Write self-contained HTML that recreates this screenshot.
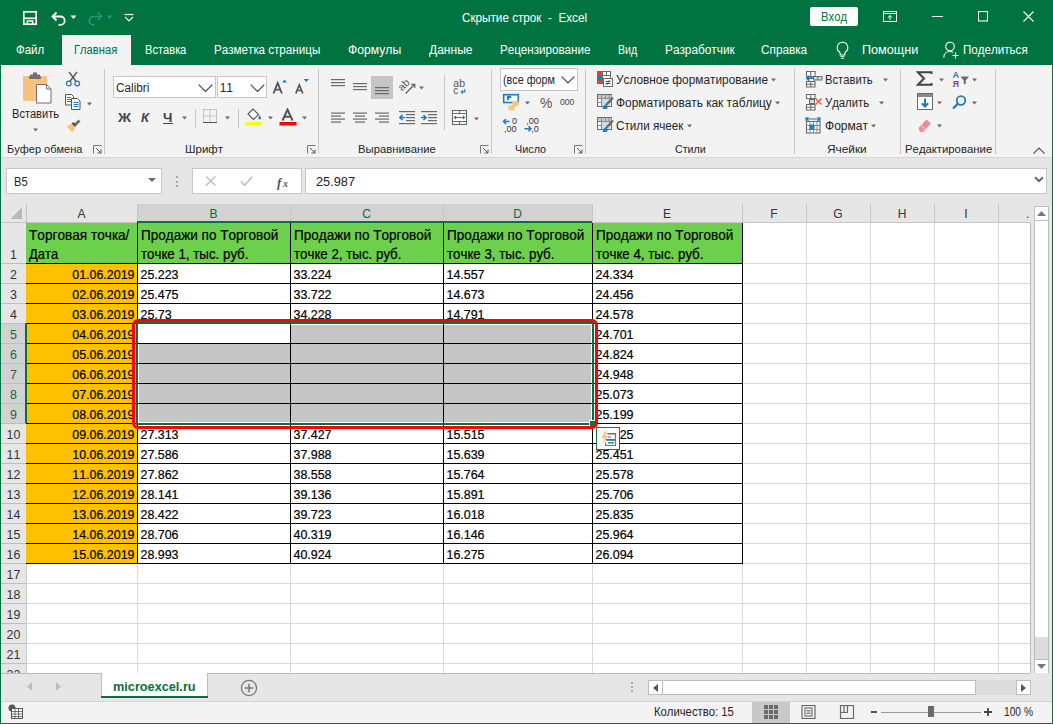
<!DOCTYPE html>
<html><head><meta charset="utf-8"><style>
html,body{margin:0;padding:0;width:1053px;height:724px;overflow:hidden;background:#f3f3f3}
#r{position:relative;width:1053px;height:724px;overflow:hidden}
#r>div,#r>svg,#r>span{position:absolute;display:block}
.t{white-space:nowrap;font-family:"Liberation Sans",sans-serif;font-kerning:none}
</style></head><body><div id="r">
<div style="left:0px;top:0px;width:1053px;height:65px;background:#017341"></div>
<svg style="left:22px;top:10px;" width="16" height="16" viewBox="0 0 16 16"><rect x="1.8" y="1.8" width="12.4" height="12.4" fill="none" stroke="#fff" stroke-width="1.7"/><path d="M1.8 8.3h12.4" stroke="#fff" stroke-width="1.6"/><path d="M5.3 14.5v-3.5h5.4v3.5" fill="none" stroke="#fff" stroke-width="1.5"/></svg>
<svg style="left:50px;top:10px;" width="18" height="16" viewBox="0 0 18 16"><path d="M3 6.5h7.5a4.2 4.2 0 0 1 0 8.4h-2" fill="none" stroke="#fff" stroke-width="1.8"/><path d="M6.5 2.5L2.5 6.5l4 4" fill="none" stroke="#fff" stroke-width="1.8"/></svg>
<svg style="left:70px;top:15px;" width="7" height="5" viewBox="0 0 7 5"><path d="M0.5 0.5h6l-3 3.5z" fill="#fff"/></svg>
<svg style="left:86px;top:10px;" width="18" height="16" viewBox="0 0 18 16"><path d="M15 6.5h-7.5a4.2 4.2 0 0 0 0 8.4h1" fill="none" stroke="#2a9577" stroke-width="1.6"/><path d="M11.5 2.5l4 4-4 4" fill="none" stroke="#2a9577" stroke-width="1.6"/></svg>
<svg style="left:106px;top:15px;" width="7" height="5" viewBox="0 0 7 5"><path d="M0.5 0.5h6l-3 3.5z" fill="#2a9577"/></svg>
<svg style="left:124px;top:13px;" width="10" height="9" viewBox="0 0 10 9"><path d="M0.5 1.5h9" stroke="#fff" stroke-width="1.2"/><path d="M1 4l4 4 4-4" fill="none" stroke="#fff" stroke-width="1.1"/></svg>
<span class="t" style="transform:scaleX(0.9750);left:462px;transform-origin:0 0;top:11.84px;font-size:12px;line-height:12px;color:#fff;font-weight:normal;">Скрытие строк&nbsp; -&nbsp; Excel</span>
<div style="left:810px;top:7px;width:48px;height:19px;background:#fff;border-radius:2px"></div>
<span class="t" style="transform:scaleX(0.9391);left:821px;transform-origin:0 0;top:10.84px;font-size:12px;line-height:12px;color:#017341;font-weight:normal;">Вход</span>
<svg style="left:883px;top:10px;" width="15" height="12" viewBox="0 0 15 12"><rect x="0.5" y="1.5" width="13" height="10" fill="none" stroke="#fff" stroke-width="1"/><path d="M0.5 3.5h13" stroke="#fff"/><path d="M7 10V5.5M4.8 7.7L7 5.5l2.2 2.2" fill="none" stroke="#fff" stroke-width="1"/></svg>
<div style="left:932px;top:16px;width:11px;height:1px;background:#fff"></div>
<svg style="left:978px;top:11px;" width="11" height="11" viewBox="0 0 11 11"><rect x="0.5" y="0.5" width="9" height="9.5" fill="none" stroke="#fff" stroke-width="1.1"/></svg>
<svg style="left:1023px;top:11px;" width="11" height="11" viewBox="0 0 11 11"><path d="M0.5 0.5l10 10M10.5 0.5l-10 10" stroke="#fff" stroke-width="1.1"/></svg>
<div style="left:62px;top:35px;width:69px;height:30px;background:#f3f3f3"></div>
<span class="t" style="transform:scaleX(0.9554);left:16px;transform-origin:0 0;top:43.84px;font-size:12px;line-height:12px;color:#fff;font-weight:normal;">Файл</span>
<span class="t" style="transform:scaleX(0.9340);left:74px;transform-origin:0 0;top:43.84px;font-size:12px;line-height:12px;color:#017341;font-weight:normal;">Главная</span>
<span class="t" style="transform:scaleX(0.9262);left:145.2px;transform-origin:0 0;top:43.84px;font-size:12px;line-height:12px;color:#fff;font-weight:normal;">Вставка</span>
<span class="t" style="transform:scaleX(0.9705);left:214.4px;transform-origin:0 0;top:43.84px;font-size:12px;line-height:12px;color:#fff;font-weight:normal;">Разметка страницы</span>
<span class="t" style="transform:scaleX(1.0161);left:348.3px;transform-origin:0 0;top:43.84px;font-size:12px;line-height:12px;color:#fff;font-weight:normal;">Формулы</span>
<span class="t" style="transform:scaleX(1.0032);left:428.7px;transform-origin:0 0;top:43.84px;font-size:12px;line-height:12px;color:#fff;font-weight:normal;">Данные</span>
<span class="t" style="transform:scaleX(0.9672);left:499.5px;transform-origin:0 0;top:43.84px;font-size:12px;line-height:12px;color:#fff;font-weight:normal;">Рецензирование</span>
<span class="t" style="transform:scaleX(0.8840);left:617.5px;transform-origin:0 0;top:43.84px;font-size:12px;line-height:12px;color:#fff;font-weight:normal;">Вид</span>
<span class="t" style="transform:scaleX(0.9847);left:664.5px;transform-origin:0 0;top:43.84px;font-size:12px;line-height:12px;color:#fff;font-weight:normal;">Разработчик</span>
<span class="t" style="transform:scaleX(0.9826);left:761px;transform-origin:0 0;top:43.84px;font-size:12px;line-height:12px;color:#fff;font-weight:normal;">Справка</span>
<span class="t" style="transform:scaleX(1.0536);left:862.4px;transform-origin:0 0;top:43.84px;font-size:12px;line-height:12px;color:#fff;font-weight:normal;">Помощни</span>
<span class="t" style="transform:scaleX(0.9666);left:963px;transform-origin:0 0;top:43.84px;font-size:12px;line-height:12px;color:#fff;font-weight:normal;">Поделиться</span>
<svg style="left:835px;top:41px;" width="15" height="18" viewBox="0 0 15 18"><path d="M7.5 1.2a5.3 5.3 0 0 0-3.2 9.5c.6.6.9 1.3.9 2v1.3h4.6v-1.3c0-.7.3-1.4.9-2a5.3 5.3 0 0 0-3.2-9.5z" fill="none" stroke="#fff" stroke-width="1.1"/><path d="M5.5 15.8h4M6.2 17.5h2.6" stroke="#fff" stroke-width="1.1"/></svg>
<svg style="left:943px;top:41px;" width="17" height="18" viewBox="0 0 17 18"><circle cx="7" cy="5.5" r="4.3" fill="none" stroke="#fff" stroke-width="1.1"/><path d="M0.8 16.5c0-3.6 2.7-6 6.2-6 1.3 0 2.4.3 3.3.9" fill="none" stroke="#fff" stroke-width="1.1"/><path d="M12.5 11.5v6M9.5 14.5h6" stroke="#fff" stroke-width="1.1"/></svg>
<div style="left:0px;top:65px;width:1053px;height:92px;background:#f3f3f3"></div>
<div style="left:0px;top:157px;width:1053px;height:1px;background:#d6d6d6"></div>
<div style="left:0px;top:158px;width:1053px;height:45px;background:#e6e6e6"></div>
<div style="left:104px;top:69px;width:1px;height:85px;background:#c8c8c8"></div>
<div style="left:318px;top:69px;width:1px;height:85px;background:#c8c8c8"></div>
<div style="left:491px;top:69px;width:1px;height:85px;background:#c8c8c8"></div>
<div style="left:585px;top:69px;width:1px;height:85px;background:#c8c8c8"></div>
<div style="left:794px;top:69px;width:1px;height:85px;background:#c8c8c8"></div>
<div style="left:900px;top:69px;width:1px;height:85px;background:#c8c8c8"></div>
<div style="left:995px;top:69px;width:1px;height:85px;background:#c8c8c8"></div>
<span class="t" style="transform:scaleX(1.0005);left:6.6px;transform-origin:0 0;top:144.09px;font-size:11px;line-height:11px;color:#262626;font-weight:normal;">Буфер обмена</span>
<span class="t" style="transform:scaleX(1.0429);left:184.8px;transform-origin:0 0;top:144.09px;font-size:11px;line-height:11px;color:#262626;font-weight:normal;">Шрифт</span>
<span class="t" style="transform:scaleX(1.0258);left:357.6px;transform-origin:0 0;top:144.09px;font-size:11px;line-height:11px;color:#262626;font-weight:normal;">Выравнивание</span>
<span class="t" style="transform:scaleX(0.9836);left:514.6px;transform-origin:0 0;top:144.09px;font-size:11px;line-height:11px;color:#262626;font-weight:normal;">Число</span>
<span class="t" style="transform:scaleX(0.9652);left:674.6px;transform-origin:0 0;top:144.09px;font-size:11px;line-height:11px;color:#262626;font-weight:normal;">Стили</span>
<span class="t" style="transform:scaleX(1.0757);left:826.9px;transform-origin:0 0;top:144.09px;font-size:11px;line-height:11px;color:#262626;font-weight:normal;">Ячейки</span>
<span class="t" style="transform:scaleX(1.0316);left:904.5px;transform-origin:0 0;top:144.09px;font-size:11px;line-height:11px;color:#262626;font-weight:normal;">Редактирование</span>
<svg style="left:93px;top:145px;" width="9" height="9" viewBox="0 0 9 9"><path d="M0.5 8.5v-8h8" fill="none" stroke="#777" stroke-width="1"/><path d="M3 3l5 5M8 4.5v3.5h-3.5" fill="none" stroke="#555" stroke-width="1"/></svg>
<svg style="left:307px;top:145px;" width="9" height="9" viewBox="0 0 9 9"><path d="M0.5 8.5v-8h8" fill="none" stroke="#777" stroke-width="1"/><path d="M3 3l5 5M8 4.5v3.5h-3.5" fill="none" stroke="#555" stroke-width="1"/></svg>
<svg style="left:480px;top:145px;" width="9" height="9" viewBox="0 0 9 9"><path d="M0.5 8.5v-8h8" fill="none" stroke="#777" stroke-width="1"/><path d="M3 3l5 5M8 4.5v3.5h-3.5" fill="none" stroke="#555" stroke-width="1"/></svg>
<svg style="left:574px;top:145px;" width="9" height="9" viewBox="0 0 9 9"><path d="M0.5 8.5v-8h8" fill="none" stroke="#777" stroke-width="1"/><path d="M3 3l5 5M8 4.5v3.5h-3.5" fill="none" stroke="#555" stroke-width="1"/></svg>
<svg style="left:1033px;top:147px;" width="12" height="7" viewBox="0 0 12 7"><path d="M0.5 6.5l5.5-5.5 5.5 5.5" fill="none" stroke="#555" stroke-width="1.1"/></svg>
<svg style="left:20px;top:71px;" width="34" height="34" viewBox="0 0 34 34"><rect x="3" y="5" width="24" height="25" rx="1" fill="#f7c27a"/><path d="M10 3.5h10v3h-10z" fill="#6f6f6f"/><rect x="13" y="1.5" width="4" height="3" fill="#6f6f6f"/><rect x="9" y="5" width="12" height="3" rx="1" fill="#6f6f6f"/><path d="M16.5 13.5h10l4.5 4.5v14h-14.5z" fill="#fff" stroke="#6f6f6f" stroke-width="1"/><path d="M26.5 13.5v4.5h4.5" fill="none" stroke="#6f6f6f" stroke-width="1"/></svg>
<span class="t" style="transform:scaleX(0.9216);left:11.7px;transform-origin:0 0;top:108.34px;font-size:12px;line-height:12px;color:#262626;font-weight:normal;">Вставить</span>
<svg style="left:33px;top:128px;" width="6" height="4" viewBox="0 0 6 4"><path d="M0 0.5h5l-2.5 3z" fill="#6a6a6a"/></svg>
<svg style="left:65px;top:71px;" width="16" height="16" viewBox="0 0 16 16"><path d="M4 1l7.5 10M12 1L4.5 11" stroke="#555" stroke-width="1.3"/><circle cx="3.8" cy="12.5" r="2.4" fill="none" stroke="#1e7bc4" stroke-width="1.2"/><circle cx="12.2" cy="12.5" r="2.4" fill="none" stroke="#1e7bc4" stroke-width="1.2"/></svg>
<svg style="left:65px;top:94px;" width="16" height="16" viewBox="0 0 16 16"><path d="M0.5 0.5h6l2 2v8.5h-8z" fill="#fff" stroke="#555" stroke-width="1"/><path d="M2 3.5h4M2 5.5h4M2 7.5h4" stroke="#1e7bc4" stroke-width="1"/><path d="M6.5 4.5h6l2.5 2.5v8.5h-8.5z" fill="#fff" stroke="#555" stroke-width="1"/><path d="M8.5 8.5h5M8.5 10.5h5M8.5 12.5h5" stroke="#1e7bc4" stroke-width="1"/></svg>
<svg style="left:87px;top:102px;" width="6" height="4" viewBox="0 0 6 4"><path d="M0 0.5h5l-2.5 3z" fill="#6a6a6a"/></svg>
<svg style="left:65px;top:117px;" width="16" height="16" viewBox="0 0 16 16"><path d="M9.5 6.5l4-4 2 2-4 4z" fill="#6f6f6f"/><path d="M1.5 9.5l5-3 4 4-3 5z" fill="#f7c27a"/><path d="M6.5 6.5l2-1.5 3 3-1.5 2z" fill="#555"/></svg>
<div style="left:113px;top:76px;width:103px;height:22px;background:#fff;border:1px solid #c6c6c6;box-sizing:border-box"></div>
<div style="left:217px;top:76px;width:50px;height:22px;background:#fff;border:1px solid #c6c6c6;box-sizing:border-box"></div>
<span class="t" style="transform:scaleX(0.9819);left:116.4px;transform-origin:0 0;top:81.84px;font-size:12px;line-height:12px;color:#262626;font-weight:normal;">Calibri</span>
<span class="t" style="left:219.7px;transform-origin:0 0;top:81.84px;font-size:12px;line-height:12px;color:#262626;font-weight:normal;">11</span>
<svg style="left:198px;top:84px;" width="15" height="9" viewBox="0 0 15 9"><path d="M0.7 0.7l6.8 6.8 6.8-6.8" fill="none" stroke="#444" stroke-width="1.2"/></svg>
<svg style="left:249.5px;top:84px;" width="15" height="9" viewBox="0 0 15 9"><path d="M0.7 0.7l6.8 6.8 6.8-6.8" fill="none" stroke="#444" stroke-width="1.2"/></svg>
<svg style="left:272px;top:78px;" width="15" height="17" viewBox="0 0 15 17"><path d="M1.5 15.5l4.2-10.5 4.2 10.5M3.2 11.6h5" fill="none" stroke="#555" stroke-width="1.8"/><path d="M10 4.5l2.5-3 2.5 3z" fill="#1e7bc4"/></svg>
<svg style="left:294px;top:78px;" width="15" height="17" viewBox="0 0 15 17"><path d="M1.8 15.5l3.5-8.5 3.5 8.5M3.2 12.5h4.3" fill="none" stroke="#555" stroke-width="1.7"/><path d="M9.5 1h5.5l-2.75 3z" fill="#1e7bc4"/></svg>
<span class="t" style="transform:scaleX(1.1492);left:117.5px;transform-origin:0 0;top:112.42px;font-size:12.5px;line-height:12.5px;color:#444;font-weight:bold;">Ж</span>
<span class="t" style="transform:scaleX(1.0407);left:141px;transform-origin:0 0;top:112.42px;font-size:12.5px;line-height:12.5px;color:#444;font-weight:bold;font-style:italic;">К</span>
<span class="t" style="transform:scaleX(1.1141);left:163.3px;transform-origin:0 0;top:111.84px;font-size:12px;line-height:12px;color:#444;font-weight:bold;">Ч</span>
<div style="left:163px;top:123px;width:10px;height:1px;background:#444"></div>
<svg style="left:182px;top:116px;" width="6" height="4" viewBox="0 0 6 4"><path d="M0 0.5h5l-2.5 3z" fill="#6a6a6a"/></svg>
<div style="left:195px;top:109px;width:1px;height:19px;background:#c8c8c8"></div>
<svg style="left:203px;top:109px;" width="15" height="15" viewBox="0 0 15 15"><path d="M0.5 0.5h13v13M0.5 0.5v13M7 0.5v13M0.5 7h13" fill="none" stroke="#999" stroke-width="1" stroke-dasharray="1 1"/><path d="M0 13.5h14" stroke="#555" stroke-width="1"/></svg>
<svg style="left:225px;top:116px;" width="6" height="4" viewBox="0 0 6 4"><path d="M0 0.5h5l-2.5 3z" fill="#6a6a6a"/></svg>
<div style="left:238px;top:109px;width:1px;height:19px;background:#c8c8c8"></div>
<svg style="left:245px;top:108px;" width="19" height="18" viewBox="0 0 19 18"><path d="M3 6l5-5 5.5 5.5-5 5z" fill="#fff" stroke="#555" stroke-width="1.1"/><path d="M14.5 7c1 1.5 1.5 2.5 1.5 3.2a1.3 1.3 0 0 1-2.6 0c0-.7.5-1.7 1.1-3.2z" fill="#1e7bc4"/><rect x="0" y="14" width="17" height="3.5" fill="#ffff00"/></svg>
<svg style="left:268px;top:116px;" width="6" height="4" viewBox="0 0 6 4"><path d="M0 0.5h5l-2.5 3z" fill="#6a6a6a"/></svg>
<svg style="left:279px;top:108px;" width="18" height="18" viewBox="0 0 18 18"><path d="M3.5 12.5l5-11 5 11M5.3 8.7h6.4" fill="none" stroke="#555" stroke-width="2"/><rect x="0.5" y="14" width="17" height="3.5" fill="#ff0000"/></svg>
<svg style="left:302px;top:116px;" width="6" height="4" viewBox="0 0 6 4"><path d="M0 0.5h5l-2.5 3z" fill="#6a6a6a"/></svg>
<svg style="left:331px;top:78px;" width="16" height="16" viewBox="0 0 16 16"><rect x="0" y="1" width="14" height="1.2" fill="#6a6a6a"/><rect x="0" y="4" width="14" height="1.2" fill="#6a6a6a"/><rect x="0" y="7" width="14" height="1.2" fill="#6a6a6a"/></svg>
<svg style="left:353px;top:82px;" width="16" height="16" viewBox="0 0 16 16"><rect x="0" y="1" width="14" height="1.2" fill="#6a6a6a"/><rect x="0" y="4" width="14" height="1.2" fill="#6a6a6a"/><rect x="0" y="7" width="14" height="1.2" fill="#6a6a6a"/></svg>
<div style="left:371px;top:76px;width:22px;height:23px;background:#c5c5c5"></div>
<svg style="left:375px;top:86px;" width="16" height="16" viewBox="0 0 16 16"><rect x="0" y="1" width="14" height="1.2" fill="#6a6a6a"/><rect x="0" y="4" width="14" height="1.2" fill="#6a6a6a"/><rect x="0" y="7" width="14" height="1.2" fill="#6a6a6a"/></svg>
<svg style="left:397px;top:77px;" width="20" height="19" viewBox="0 0 20 19"><text x="0" y="0" font-family="Liberation Sans" font-size="10.5" fill="#555" transform="translate(5 14.5) rotate(-45)">ab</text><path d="M8.6 16.5L17.5 7.5" stroke="#555" stroke-width="1.1"/><path d="M14 7.2h3.8v3.8" fill="none" stroke="#555" stroke-width="1.1"/></svg>
<svg style="left:419px;top:86px;" width="6" height="4" viewBox="0 0 6 4"><path d="M0 0.5h5l-2.5 3z" fill="#6a6a6a"/></svg>
<svg style="left:331px;top:112px;" width="16" height="16" viewBox="0 0 16 16"><rect x="0" y="0.5" width="14" height="1.2" fill="#6a6a6a"/><rect x="0" y="3.5" width="10" height="1.2" fill="#6a6a6a"/><rect x="0" y="6.5" width="14" height="1.2" fill="#6a6a6a"/><rect x="0" y="9.5" width="10" height="1.2" fill="#6a6a6a"/></svg>
<svg style="left:353px;top:112px;" width="16" height="16" viewBox="0 0 16 16"><rect x="0" y="0.5" width="14" height="1.2" fill="#6a6a6a"/><rect x="2" y="3.5" width="10" height="1.2" fill="#6a6a6a"/><rect x="0" y="6.5" width="14" height="1.2" fill="#6a6a6a"/><rect x="2" y="9.5" width="10" height="1.2" fill="#6a6a6a"/></svg>
<svg style="left:375px;top:112px;" width="16" height="16" viewBox="0 0 16 16"><rect x="0" y="0.5" width="14" height="1.2" fill="#6a6a6a"/><rect x="4" y="3.5" width="10" height="1.2" fill="#6a6a6a"/><rect x="0" y="6.5" width="14" height="1.2" fill="#6a6a6a"/><rect x="4" y="9.5" width="10" height="1.2" fill="#6a6a6a"/></svg>
<svg style="left:399px;top:110px;" width="17" height="16" viewBox="0 0 17 16"><rect x="0" y="1" width="16" height="1.2" fill="#6a6a6a"/><rect x="7" y="4" width="9" height="1.2" fill="#6a6a6a"/><rect x="7" y="7" width="9" height="1.2" fill="#6a6a6a"/><rect x="7" y="10" width="9" height="1.2" fill="#6a6a6a"/><rect x="0" y="13" width="16" height="1.2" fill="#6a6a6a"/><path d="M6 7.5H1M3.5 5L1 7.5 3.5 10" fill="none" stroke="#1e7bc4" stroke-width="1.6"/></svg>
<svg style="left:421px;top:110px;" width="17" height="16" viewBox="0 0 17 16"><rect x="0" y="1" width="16" height="1.2" fill="#6a6a6a"/><rect x="7" y="4" width="9" height="1.2" fill="#6a6a6a"/><rect x="7" y="7" width="9" height="1.2" fill="#6a6a6a"/><rect x="7" y="10" width="9" height="1.2" fill="#6a6a6a"/><rect x="0" y="13" width="16" height="1.2" fill="#6a6a6a"/><path d="M0 7.5h5M2.5 5L5 7.5 2.5 10" fill="none" stroke="#1e7bc4" stroke-width="1.6"/></svg>
<div style="left:444px;top:75px;width:1px;height:55px;background:#c8c8c8"></div>
<svg style="left:452px;top:77px;" width="16" height="19" viewBox="0 0 16 19"><text x="1.3" y="9.6" font-family="Liberation Sans" font-size="10.5" fill="#555">ab</text><text x="1.3" y="17" font-family="Liberation Sans" font-size="10" fill="#555">c</text><path d="M12.8 12v3h-3.5M10.8 13.5l-1.5 1.5 1.5 1.5" fill="none" stroke="#1e7bc4" stroke-width="1.1"/></svg>
<svg style="left:451px;top:109px;" width="17" height="17" viewBox="0 0 17 17"><rect x="1.5" y="1.5" width="14" height="14" fill="#fff" stroke="#6a6a6a" stroke-width="1.1"/><path d="M1.5 4.5h14M1.5 12.5h14M8.5 1.5v3M8.5 12.5v3" stroke="#6a6a6a" stroke-width="1.1"/><path d="M3.5 8.5h10M5 7l-1.5 1.5 1.5 1.5M12 7l1.5 1.5-1.5 1.5" fill="none" stroke="#1e7bc4" stroke-width="1.1"/></svg>
<svg style="left:474px;top:117px;" width="6" height="4" viewBox="0 0 6 4"><path d="M0 0.5h5l-2.5 3z" fill="#6a6a6a"/></svg>
<div style="left:500px;top:68px;width:78px;height:23px;background:#fff;border:1px solid #c6c6c6;box-sizing:border-box"></div>
<span class="t" style="transform:scaleX(0.8987);left:503.3px;transform-origin:0 0;top:73.84px;font-size:12px;line-height:12px;color:#262626;font-weight:normal;">(все форм</span>
<svg style="left:561px;top:76px;" width="14" height="8" viewBox="0 0 14 8"><path d="M0.7 0.7l6.3 6.3 6.3-6.3" fill="none" stroke="#444" stroke-width="1.2"/></svg>
<svg style="left:502px;top:93px;" width="18" height="18" viewBox="0 0 18 18"><rect x="1.7" y="1.7" width="14.6" height="7.8" fill="#fff" stroke="#1e7bc4" stroke-width="1.6"/><circle cx="7" cy="5" r="2.4" fill="#1e7bc4"/><path d="M7 5h2.5v2.5H7z" fill="#fff"/><ellipse cx="13.5" cy="9.3" rx="3.5" ry="1.5" fill="#f7c27a"/><ellipse cx="13.5" cy="12" rx="3.5" ry="1" fill="#f7c27a"/><ellipse cx="9.5" cy="13.8" rx="3.5" ry="1.5" fill="#f7c27a"/><ellipse cx="9.5" cy="16.3" rx="3.5" ry="1" fill="#f7c27a"/></svg>
<svg style="left:525px;top:101px;" width="6" height="4" viewBox="0 0 6 4"><path d="M0 0.5h5l-2.5 3z" fill="#6a6a6a"/></svg>
<span class="t" style="transform:scaleX(0.9530);left:539.5px;transform-origin:0 0;top:96.03px;font-size:14.5px;line-height:14.5px;color:#555;font-weight:normal;">%</span>
<span class="t" style="transform:scaleX(0.8991);left:559.8px;transform-origin:0 0;top:96.87px;font-size:9.6px;line-height:9.6px;color:#444;font-weight:normal;">000</span>
<svg style="left:502px;top:116px;" width="17" height="18" viewBox="0 0 17 18"><path d="M7.5 5.5H1.5M4 3L1.5 5.5 4 8" fill="none" stroke="#1e7bc4" stroke-width="1.5"/><text x="10" y="7.6" font-family="Liberation Sans" font-size="9" fill="#333">0</text><text x="2" y="16" font-family="Liberation Sans" font-size="9" fill="#333">,00</text></svg>
<svg style="left:523px;top:116px;" width="18" height="18" viewBox="0 0 18 18"><text x="3.2" y="7.6" font-family="Liberation Sans" font-size="9" fill="#333">,00</text><path d="M1.5 12.8h6.5M5.5 10.3l2.5 2.5-2.5 2.5" fill="none" stroke="#1e7bc4" stroke-width="1.5"/><text x="8.2" y="16" font-family="Liberation Sans" font-size="9" fill="#333">,0</text></svg>
<svg style="left:597px;top:71px;" width="17" height="17" viewBox="0 0 17 17"><rect x="0.5" y="0.5" width="13" height="12" fill="#fff" stroke="#6a6a6a"/><rect x="1" y="1" width="4" height="3" fill="#e8412c"/><rect x="1" y="4.5" width="4" height="3.5" fill="#1e7bc4"/><rect x="1" y="8.5" width="4" height="3.5" fill="#e8412c"/><path d="M0.5 4.5h13M0.5 8.5h6M5.5 0.5v12M9.5 0.5v4" stroke="#6a6a6a" stroke-width="1"/><rect x="6.5" y="7.5" width="9" height="8" fill="#fff" stroke="#6a6a6a"/><path d="M8.5 10.5h5M8.5 12.5h5M12.5 9l-3 5" stroke="#444" stroke-width="0.9"/></svg>
<svg style="left:597px;top:94px;" width="17" height="17" viewBox="0 0 17 17"><rect x="0.5" y="0.5" width="14" height="12" fill="#fff" stroke="#6a6a6a"/><rect x="1" y="1" width="13.5" height="3" fill="#c8c8c8"/><path d="M0.5 4.5h14M0.5 8.5h14M4.5 0.5v12M8.5 0.5v12M12 0.5v12" stroke="#8a8a8a" stroke-width="1"/><rect x="5" y="5" width="7" height="7" fill="#bfe3e8"/><path d="M16 3.5L9 11" stroke="#6a6a6a" stroke-width="2.2"/><path d="M9.5 10.5c-2 0-3.5 1.5-4 4.5h4c1.5-1 1.5-3 0-4.5z" fill="#1e7bc4"/></svg>
<svg style="left:597px;top:117px;" width="17" height="17" viewBox="0 0 17 17"><rect x="0.5" y="0.5" width="14" height="12" fill="#fff" stroke="#6a6a6a"/><rect x="1" y="1" width="13.5" height="3" fill="#c8c8c8"/><path d="M0.5 4.5h14M0.5 8.5h14M4.5 0.5v12M8.5 0.5v12M12 0.5v12" stroke="#8a8a8a" stroke-width="1"/><rect x="5" y="5" width="7" height="7" fill="#bfe3e8"/><path d="M16 3.5L9 11" stroke="#6a6a6a" stroke-width="2.2"/><path d="M9.5 10.5c-2 0-3.5 1.5-4 4.5h4c1.5-1 1.5-3 0-4.5z" fill="#1e7bc4"/></svg>
<span class="t" style="transform:scaleX(0.9887);left:616.1px;transform-origin:0 0;top:73.84px;font-size:12px;line-height:12px;color:#262626;font-weight:normal;">Условное форматирование</span>
<svg style="left:771px;top:78px;" width="6" height="4" viewBox="0 0 6 4"><path d="M0 0.5h5l-2.5 3z" fill="#6a6a6a"/></svg>
<span class="t" style="transform:scaleX(0.9911);left:616.1px;transform-origin:0 0;top:96.84px;font-size:12px;line-height:12px;color:#262626;font-weight:normal;">Форматировать как таблицу</span>
<svg style="left:775px;top:101px;" width="6" height="4" viewBox="0 0 6 4"><path d="M0 0.5h5l-2.5 3z" fill="#6a6a6a"/></svg>
<span class="t" style="transform:scaleX(0.9745);left:616.1px;transform-origin:0 0;top:119.84px;font-size:12px;line-height:12px;color:#262626;font-weight:normal;">Стили ячеек</span>
<svg style="left:687px;top:124px;" width="6" height="4" viewBox="0 0 6 4"><path d="M0 0.5h5l-2.5 3z" fill="#6a6a6a"/></svg>
<svg style="left:805px;top:71px;" width="18" height="17" viewBox="0 0 18 17"><path d="M1.5 0.5h8.5v5h-8.5zM5.75 0.5v5M1.5 10.5h8.5v5.5h-8.5zM5.75 10.5v5.5M1.5 13.2h8.5" fill="#fff" stroke="#6a6a6a" stroke-width="1.1"/><rect x="8.5" y="5.5" width="8.5" height="3.5" fill="#bfe3de" stroke="#6a6a6a" stroke-width="1"/><path d="M12.75 5.5v3.5" stroke="#6a6a6a"/><path d="M8 7.2H1.8M4.2 4.8L1.8 7.2l2.4 2.4" fill="none" stroke="#1e7bc4" stroke-width="1.7"/></svg>
<span class="t" style="transform:scaleX(0.9333);left:825.2px;transform-origin:0 0;top:73.84px;font-size:12px;line-height:12px;color:#262626;font-weight:normal;">Вставить</span>
<svg style="left:883px;top:78px;" width="6" height="4" viewBox="0 0 6 4"><path d="M0 0.5h5l-2.5 3z" fill="#6a6a6a"/></svg>
<svg style="left:805px;top:94px;" width="18" height="17" viewBox="0 0 18 17"><path d="M1.5 0.5h8.5v4h-8.5zM5.75 0.5v4M1.5 10.5h8.5v5.5h-8.5zM5.75 10.5v5.5M1.5 13.2h8.5" fill="#fff" stroke="#6a6a6a" stroke-width="1.1"/><rect x="4.5" y="5.5" width="5" height="4" fill="#bfe3de" stroke="#6a6a6a" stroke-width="1"/><path d="M10.5 4.5l6 6M16.5 4.5l-6 6" stroke="#f05a3c" stroke-width="1.5"/></svg>
<span class="t" style="transform:scaleX(0.9430);left:825.2px;transform-origin:0 0;top:96.84px;font-size:12px;line-height:12px;color:#262626;font-weight:normal;">Удалить</span>
<svg style="left:879px;top:101px;" width="6" height="4" viewBox="0 0 6 4"><path d="M0 0.5h5l-2.5 3z" fill="#6a6a6a"/></svg>
<svg style="left:805px;top:116px;" width="18" height="18" viewBox="0 0 18 18"><path d="M1.5 3h13M1 1v4M15 1v4M3.5 1.2L1.5 3l2 1.8M12.5 1.2l2 1.8-2 1.8" fill="none" stroke="#1e7bc4" stroke-width="1.1"/><rect x="1.5" y="5.5" width="13.5" height="11.5" fill="#fff" stroke="#6a6a6a" stroke-width="1.1"/><path d="M1.5 9.5h13.5M1.5 13.5h13.5M5 5.5v11.5M8.5 5.5v11.5M12 5.5v11.5" stroke="#8a8a8a" stroke-width="1"/><rect x="4.5" y="8.5" width="5" height="5" fill="#1e7bc4"/></svg>
<span class="t" style="transform:scaleX(1.0049);left:825.2px;transform-origin:0 0;top:119.84px;font-size:12px;line-height:12px;color:#262626;font-weight:normal;">Формат</span>
<svg style="left:871px;top:124px;" width="6" height="4" viewBox="0 0 6 4"><path d="M0 0.5h5l-2.5 3z" fill="#6a6a6a"/></svg>
<svg style="left:916px;top:71px;" width="17" height="16" viewBox="0 0 17 16"><path d="M15.5 3V1.2H1.8l6.2 6.3-6.2 6.3h13.7V12" fill="none" stroke="#444" stroke-width="2.1"/></svg>
<svg style="left:939px;top:78px;" width="6" height="4" viewBox="0 0 6 4"><path d="M0 0.5h5l-2.5 3z" fill="#6a6a6a"/></svg>
<svg style="left:952px;top:70px;" width="18" height="18" viewBox="0 0 18 18"><text x="0.5" y="8" font-family="Liberation Sans" font-size="9" font-weight="bold" fill="#1e7bc4">A</text><text x="0.5" y="17" font-family="Liberation Sans" font-size="9" font-weight="bold" fill="#7a3aa0">Я</text><path d="M8.5 6.5h8.5l-3.3 4v4l-2 -1v-3z" fill="#6a6a6a"/></svg>
<svg style="left:972px;top:78px;" width="6" height="4" viewBox="0 0 6 4"><path d="M0 0.5h5l-2.5 3z" fill="#6a6a6a"/></svg>
<svg style="left:917px;top:93px;" width="17" height="18" viewBox="0 0 17 18"><rect x="0.5" y="0.5" width="15" height="16" fill="#fff" stroke="#6a6a6a"/><rect x="1" y="1" width="14.5" height="3" fill="#8a8a8a"/><path d="M8 5.5v8M4.8 10.3L8 13.5l3.2-3.2" fill="none" stroke="#1e7bc4" stroke-width="2"/></svg>
<svg style="left:937px;top:101px;" width="6" height="4" viewBox="0 0 6 4"><path d="M0 0.5h5l-2.5 3z" fill="#6a6a6a"/></svg>
<svg style="left:952px;top:95px;" width="15" height="15" viewBox="0 0 15 15"><circle cx="9" cy="5.5" r="4.3" fill="none" stroke="#1e7bc4" stroke-width="1.8"/><path d="M6 8.5L1 13.5" stroke="#1e7bc4" stroke-width="2.4"/></svg>
<svg style="left:972px;top:101px;" width="6" height="4" viewBox="0 0 6 4"><path d="M0 0.5h5l-2.5 3z" fill="#6a6a6a"/></svg>
<svg style="left:917px;top:116px;" width="16" height="16" viewBox="0 0 16 16"><path d="M1.5 12l8-8.5 4.5 4-8 8.5h-3z" fill="#f28b9c"/><path d="M4.5 10l3 2.8" stroke="#f3f3f3" stroke-width="0.8"/></svg>
<svg style="left:937px;top:124px;" width="6" height="4" viewBox="0 0 6 4"><path d="M0 0.5h5l-2.5 3z" fill="#6a6a6a"/></svg>
<div style="left:6px;top:168px;width:156px;height:26px;background:#fff;border:1px solid #c6c6c6;box-sizing:border-box"></div>
<span class="t" style="transform:scaleX(0.9328);left:13.7px;transform-origin:0 0;top:175.84px;font-size:12px;line-height:12px;color:#262626;font-weight:normal;">B5</span>
<svg style="left:148px;top:178px;" width="8" height="4" viewBox="0 0 8 4"><path d="M0 0h8l-4 4z" fill="#6a6a6a"/></svg>
<div style="left:176px;top:176px;width:2px;height:2px;background:#a8a8a8"></div>
<div style="left:176px;top:180.5px;width:2px;height:2px;background:#a8a8a8"></div>
<div style="left:176px;top:185px;width:2px;height:2px;background:#a8a8a8"></div>
<div style="left:192px;top:168px;width:110px;height:26px;background:#fff;border:1px solid #c6c6c6;box-sizing:border-box"></div>
<svg style="left:205px;top:176px;" width="12" height="10" viewBox="0 0 12 10"><path d="M1 0.5l9.5 9M10.5 0.5l-9.5 9" stroke="#bdbdbd" stroke-width="1.4"/></svg>
<svg style="left:240px;top:176px;" width="13" height="10" viewBox="0 0 13 10"><path d="M0.8 5.2l3.8 4 7.6-8.5" fill="none" stroke="#bdbdbd" stroke-width="1.6"/></svg>
<span class="t" style="left:277px;transform-origin:0 0;top:176.0px;font-size:13px;line-height:13px;color:#555;font-weight:bold;font-style:italic;font-family:'Liberation Serif',serif;">f</span>
<span class="t" style="left:283px;transform-origin:0 0;top:178.53px;font-size:10px;line-height:10px;color:#555;font-weight:bold;font-style:italic;font-family:'Liberation Serif',serif;">x</span>
<div style="left:305px;top:168px;width:742px;height:26px;background:#fff;border:1px solid #c6c6c6;box-sizing:border-box"></div>
<span class="t" style="transform:scaleX(1.0289);left:316px;transform-origin:0 0;top:175.5px;font-size:12.4px;line-height:12.4px;color:#222;font-weight:normal;">25.987</span>
<svg style="left:1034px;top:176px;" width="10" height="7" viewBox="0 0 10 7"><path d="M1 1.2l4 4 4-4" fill="none" stroke="#666" stroke-width="2"/></svg>
<div style="left:1px;top:197px;width:1033px;height:7px;background:#e6e6e6"></div>
<div style="left:26px;top:223px;width:1004px;height:450px;background:#fff"></div>
<div style="left:1px;top:204px;width:1030px;height:19px;background:#e6e6e6"></div>
<div style="left:137px;top:204px;width:455px;height:19px;background:#d2d2d2"></div>
<div style="left:137px;top:221px;width:455px;height:2px;background:#017341"></div>
<svg style="left:10px;top:207px;" width="13" height="13" viewBox="0 0 13 13"><path d="M12 0.5V12H0.5z" fill="#b8b8b8"/></svg>
<div style="left:26px;top:204px;width:1px;height:469px;background:#c6c6c6"></div>
<div style="left:137px;top:204px;width:1px;height:19px;background:#c6c6c6"></div>
<div style="left:290px;top:204px;width:1px;height:19px;background:#c6c6c6"></div>
<div style="left:443px;top:204px;width:1px;height:19px;background:#c6c6c6"></div>
<div style="left:592px;top:204px;width:1px;height:19px;background:#c6c6c6"></div>
<div style="left:742px;top:204px;width:1px;height:19px;background:#c6c6c6"></div>
<div style="left:806px;top:204px;width:1px;height:19px;background:#c6c6c6"></div>
<div style="left:870px;top:204px;width:1px;height:19px;background:#c6c6c6"></div>
<div style="left:934px;top:204px;width:1px;height:19px;background:#c6c6c6"></div>
<div style="left:998px;top:204px;width:1px;height:19px;background:#c6c6c6"></div>
<div style="left:26px;top:222px;width:1004px;height:1px;background:#c6c6c6"></div>
<div style="left:137px;top:221px;width:455px;height:2px;background:#017341"></div>
<span class="t" style="left:26px;width:111px;text-align:center;top:207.84199999999998px;font-size:12px;line-height:12px;color:#333">A</span>
<span class="t" style="left:137px;width:153px;text-align:center;top:207.84199999999998px;font-size:12px;line-height:12px;color:#0e6b3a">B</span>
<span class="t" style="left:290px;width:153px;text-align:center;top:207.84199999999998px;font-size:12px;line-height:12px;color:#0e6b3a">C</span>
<span class="t" style="left:443px;width:149px;text-align:center;top:207.84199999999998px;font-size:12px;line-height:12px;color:#0e6b3a">D</span>
<span class="t" style="left:592px;width:150px;text-align:center;top:207.84199999999998px;font-size:12px;line-height:12px;color:#333">E</span>
<span class="t" style="left:742px;width:64px;text-align:center;top:207.84199999999998px;font-size:12px;line-height:12px;color:#333">F</span>
<span class="t" style="left:806px;width:64px;text-align:center;top:207.84199999999998px;font-size:12px;line-height:12px;color:#333">G</span>
<span class="t" style="left:870px;width:64px;text-align:center;top:207.84199999999998px;font-size:12px;line-height:12px;color:#333">H</span>
<span class="t" style="left:934px;width:64px;text-align:center;top:207.84199999999998px;font-size:12px;line-height:12px;color:#333">I</span>
<span class="t" style="left:1026px;top:207.84199999999998px;font-size:12px;line-height:12px;color:#333">.</span>
<div style="left:1px;top:223px;width:25px;height:450px;background:#e6e6e6"></div>
<div style="left:1px;top:323px;width:24px;height:100px;background:#d2d2d2"></div>
<div style="left:137px;top:223px;width:1px;height:450px;background:#d9d9d9"></div>
<div style="left:290px;top:223px;width:1px;height:450px;background:#d9d9d9"></div>
<div style="left:443px;top:223px;width:1px;height:450px;background:#d9d9d9"></div>
<div style="left:592px;top:223px;width:1px;height:450px;background:#d9d9d9"></div>
<div style="left:742px;top:223px;width:1px;height:450px;background:#d9d9d9"></div>
<div style="left:806px;top:223px;width:1px;height:450px;background:#d9d9d9"></div>
<div style="left:870px;top:223px;width:1px;height:450px;background:#d9d9d9"></div>
<div style="left:934px;top:223px;width:1px;height:450px;background:#d9d9d9"></div>
<div style="left:998px;top:223px;width:1px;height:450px;background:#d9d9d9"></div>
<div style="left:26px;top:263px;width:1004px;height:1px;background:#d9d9d9"></div>
<div style="left:1px;top:263px;width:25px;height:1px;background:#bdbdbd"></div>
<div style="left:26px;top:283px;width:1004px;height:1px;background:#d9d9d9"></div>
<div style="left:1px;top:283px;width:25px;height:1px;background:#bdbdbd"></div>
<div style="left:26px;top:303px;width:1004px;height:1px;background:#d9d9d9"></div>
<div style="left:1px;top:303px;width:25px;height:1px;background:#bdbdbd"></div>
<div style="left:26px;top:323px;width:1004px;height:1px;background:#d9d9d9"></div>
<div style="left:1px;top:323px;width:25px;height:1px;background:#bdbdbd"></div>
<div style="left:26px;top:343px;width:1004px;height:1px;background:#d9d9d9"></div>
<div style="left:1px;top:343px;width:25px;height:1px;background:#bdbdbd"></div>
<div style="left:26px;top:363px;width:1004px;height:1px;background:#d9d9d9"></div>
<div style="left:1px;top:363px;width:25px;height:1px;background:#bdbdbd"></div>
<div style="left:26px;top:383px;width:1004px;height:1px;background:#d9d9d9"></div>
<div style="left:1px;top:383px;width:25px;height:1px;background:#bdbdbd"></div>
<div style="left:26px;top:403px;width:1004px;height:1px;background:#d9d9d9"></div>
<div style="left:1px;top:403px;width:25px;height:1px;background:#bdbdbd"></div>
<div style="left:26px;top:423px;width:1004px;height:1px;background:#d9d9d9"></div>
<div style="left:1px;top:423px;width:25px;height:1px;background:#bdbdbd"></div>
<div style="left:26px;top:443px;width:1004px;height:1px;background:#d9d9d9"></div>
<div style="left:1px;top:443px;width:25px;height:1px;background:#bdbdbd"></div>
<div style="left:26px;top:463px;width:1004px;height:1px;background:#d9d9d9"></div>
<div style="left:1px;top:463px;width:25px;height:1px;background:#bdbdbd"></div>
<div style="left:26px;top:483px;width:1004px;height:1px;background:#d9d9d9"></div>
<div style="left:1px;top:483px;width:25px;height:1px;background:#bdbdbd"></div>
<div style="left:26px;top:503px;width:1004px;height:1px;background:#d9d9d9"></div>
<div style="left:1px;top:503px;width:25px;height:1px;background:#bdbdbd"></div>
<div style="left:26px;top:523px;width:1004px;height:1px;background:#d9d9d9"></div>
<div style="left:1px;top:523px;width:25px;height:1px;background:#bdbdbd"></div>
<div style="left:26px;top:543px;width:1004px;height:1px;background:#d9d9d9"></div>
<div style="left:1px;top:543px;width:25px;height:1px;background:#bdbdbd"></div>
<div style="left:26px;top:563px;width:1004px;height:1px;background:#d9d9d9"></div>
<div style="left:1px;top:563px;width:25px;height:1px;background:#bdbdbd"></div>
<div style="left:26px;top:583px;width:1004px;height:1px;background:#d9d9d9"></div>
<div style="left:1px;top:583px;width:25px;height:1px;background:#bdbdbd"></div>
<div style="left:26px;top:603px;width:1004px;height:1px;background:#d9d9d9"></div>
<div style="left:1px;top:603px;width:25px;height:1px;background:#bdbdbd"></div>
<div style="left:26px;top:623px;width:1004px;height:1px;background:#d9d9d9"></div>
<div style="left:1px;top:623px;width:25px;height:1px;background:#bdbdbd"></div>
<div style="left:26px;top:643px;width:1004px;height:1px;background:#d9d9d9"></div>
<div style="left:1px;top:643px;width:25px;height:1px;background:#bdbdbd"></div>
<div style="left:26px;top:663px;width:1004px;height:1px;background:#d9d9d9"></div>
<div style="left:1px;top:663px;width:25px;height:1px;background:#bdbdbd"></div>
<div style="left:1px;top:222px;width:25px;height:1px;background:#c6c6c6"></div>
<div style="left:26px;top:223px;width:111px;height:40px;background:#ffc000"></div>
<div style="left:26px;top:223px;width:716px;height:40px;background:#6cd04c"></div>
<div style="left:26px;top:263px;width:111px;height:20px;background:#ffc000"></div>
<div style="left:26px;top:283px;width:111px;height:20px;background:#ffc000"></div>
<div style="left:26px;top:303px;width:111px;height:20px;background:#ffc000"></div>
<div style="left:26px;top:323px;width:111px;height:20px;background:#ffc000"></div>
<div style="left:26px;top:343px;width:111px;height:20px;background:#ffc000"></div>
<div style="left:26px;top:363px;width:111px;height:20px;background:#ffc000"></div>
<div style="left:26px;top:383px;width:111px;height:20px;background:#ffc000"></div>
<div style="left:26px;top:403px;width:111px;height:20px;background:#ffc000"></div>
<div style="left:26px;top:423px;width:111px;height:20px;background:#ffc000"></div>
<div style="left:26px;top:443px;width:111px;height:20px;background:#ffc000"></div>
<div style="left:26px;top:463px;width:111px;height:20px;background:#ffc000"></div>
<div style="left:26px;top:483px;width:111px;height:20px;background:#ffc000"></div>
<div style="left:26px;top:503px;width:111px;height:20px;background:#ffc000"></div>
<div style="left:26px;top:523px;width:111px;height:20px;background:#ffc000"></div>
<div style="left:26px;top:543px;width:111px;height:20px;background:#ffc000"></div>
<div style="left:291px;top:325px;width:300px;height:18px;background:#c6c6c6"></div>
<div style="left:139px;top:344px;width:452px;height:78px;background:#c6c6c6"></div>
<div style="left:137px;top:223px;width:1px;height:341px;background:#000"></div>
<div style="left:290px;top:223px;width:1px;height:341px;background:#000"></div>
<div style="left:443px;top:223px;width:1px;height:341px;background:#000"></div>
<div style="left:592px;top:223px;width:1px;height:341px;background:#000"></div>
<div style="left:742px;top:223px;width:1px;height:341px;background:#000"></div>
<div style="left:26px;top:263px;width:716px;height:1px;background:#000"></div>
<div style="left:26px;top:283px;width:716px;height:1px;background:#000"></div>
<div style="left:26px;top:303px;width:716px;height:1px;background:#000"></div>
<div style="left:26px;top:323px;width:716px;height:1px;background:#000"></div>
<div style="left:26px;top:343px;width:716px;height:1px;background:#000"></div>
<div style="left:26px;top:363px;width:716px;height:1px;background:#000"></div>
<div style="left:26px;top:383px;width:716px;height:1px;background:#000"></div>
<div style="left:26px;top:403px;width:716px;height:1px;background:#000"></div>
<div style="left:26px;top:423px;width:716px;height:1px;background:#000"></div>
<div style="left:26px;top:443px;width:716px;height:1px;background:#000"></div>
<div style="left:26px;top:463px;width:716px;height:1px;background:#000"></div>
<div style="left:26px;top:483px;width:716px;height:1px;background:#000"></div>
<div style="left:26px;top:503px;width:716px;height:1px;background:#000"></div>
<div style="left:26px;top:523px;width:716px;height:1px;background:#000"></div>
<div style="left:26px;top:543px;width:716px;height:1px;background:#000"></div>
<div style="left:26px;top:563px;width:716px;height:1px;background:#000"></div>
<span class="t" style="left:1px;width:25px;text-align:center;top:248.5034px;font-size:12.4px;line-height:12.4px;color:#333">1</span>
<span class="t" style="left:1px;width:25px;text-align:center;top:268.5034px;font-size:12.4px;line-height:12.4px;color:#333">2</span>
<span class="t" style="left:1px;width:25px;text-align:center;top:288.5034px;font-size:12.4px;line-height:12.4px;color:#333">3</span>
<span class="t" style="left:1px;width:25px;text-align:center;top:308.5034px;font-size:12.4px;line-height:12.4px;color:#333">4</span>
<span class="t" style="left:1px;width:25px;text-align:center;top:328.5034px;font-size:12.4px;line-height:12.4px;color:#0e6b3a">5</span>
<span class="t" style="left:1px;width:25px;text-align:center;top:348.5034px;font-size:12.4px;line-height:12.4px;color:#0e6b3a">6</span>
<span class="t" style="left:1px;width:25px;text-align:center;top:368.5034px;font-size:12.4px;line-height:12.4px;color:#0e6b3a">7</span>
<span class="t" style="left:1px;width:25px;text-align:center;top:388.5034px;font-size:12.4px;line-height:12.4px;color:#0e6b3a">8</span>
<span class="t" style="left:1px;width:25px;text-align:center;top:408.5034px;font-size:12.4px;line-height:12.4px;color:#0e6b3a">9</span>
<span class="t" style="left:1px;width:25px;text-align:center;top:428.5034px;font-size:12.4px;line-height:12.4px;color:#333">10</span>
<span class="t" style="left:1px;width:25px;text-align:center;top:448.5034px;font-size:12.4px;line-height:12.4px;color:#333">11</span>
<span class="t" style="left:1px;width:25px;text-align:center;top:468.5034px;font-size:12.4px;line-height:12.4px;color:#333">12</span>
<span class="t" style="left:1px;width:25px;text-align:center;top:488.5034px;font-size:12.4px;line-height:12.4px;color:#333">13</span>
<span class="t" style="left:1px;width:25px;text-align:center;top:508.5034px;font-size:12.4px;line-height:12.4px;color:#333">14</span>
<span class="t" style="left:1px;width:25px;text-align:center;top:528.5034px;font-size:12.4px;line-height:12.4px;color:#333">15</span>
<span class="t" style="left:1px;width:25px;text-align:center;top:548.5034px;font-size:12.4px;line-height:12.4px;color:#333">16</span>
<span class="t" style="left:1px;width:25px;text-align:center;top:568.5034px;font-size:12.4px;line-height:12.4px;color:#333">17</span>
<span class="t" style="left:1px;width:25px;text-align:center;top:588.5034px;font-size:12.4px;line-height:12.4px;color:#333">18</span>
<span class="t" style="left:1px;width:25px;text-align:center;top:608.5034px;font-size:12.4px;line-height:12.4px;color:#333">19</span>
<span class="t" style="left:1px;width:25px;text-align:center;top:628.5034px;font-size:12.4px;line-height:12.4px;color:#333">20</span>
<span class="t" style="left:1px;width:25px;text-align:center;top:648.5034px;font-size:12.4px;line-height:12.4px;color:#333">21</span>
<span class="t" style="left:1px;width:25px;text-align:center;top:668.5034px;font-size:12.4px;line-height:12.4px;color:#333">22</span>
<span class="t" style="transform:scaleX(0.9814);left:29.3px;transform-origin:0 0;top:229.23px;font-size:13.9px;line-height:13.9px;color:#000;font-weight:normal;-webkit-text-stroke:0.2px #000;">Торговая точка/</span>
<span class="t" style="transform:scaleX(0.9317);left:29.3px;transform-origin:0 0;top:247.73px;font-size:13.9px;line-height:13.9px;color:#000;font-weight:normal;-webkit-text-stroke:0.2px #000;">Дата</span>
<span class="t" style="transform:scaleX(0.9746);left:140.5px;transform-origin:0 0;top:229.23px;font-size:13.9px;line-height:13.9px;color:#000;font-weight:normal;-webkit-text-stroke:0.2px #000;">Продажи по Торговой</span>
<span class="t" style="transform:scaleX(0.9595);left:140.5px;transform-origin:0 0;top:247.73px;font-size:13.9px;line-height:13.9px;color:#000;font-weight:normal;-webkit-text-stroke:0.2px #000;">точке 1, тыс. руб.</span>
<span class="t" style="transform:scaleX(0.9746);left:293.5px;transform-origin:0 0;top:229.23px;font-size:13.9px;line-height:13.9px;color:#000;font-weight:normal;-webkit-text-stroke:0.2px #000;">Продажи по Торговой</span>
<span class="t" style="transform:scaleX(0.9595);left:293.5px;transform-origin:0 0;top:247.73px;font-size:13.9px;line-height:13.9px;color:#000;font-weight:normal;-webkit-text-stroke:0.2px #000;">точке 2, тыс. руб.</span>
<span class="t" style="transform:scaleX(0.9746);left:446.5px;transform-origin:0 0;top:229.23px;font-size:13.9px;line-height:13.9px;color:#000;font-weight:normal;-webkit-text-stroke:0.2px #000;">Продажи по Торговой</span>
<span class="t" style="transform:scaleX(0.9595);left:446.5px;transform-origin:0 0;top:247.73px;font-size:13.9px;line-height:13.9px;color:#000;font-weight:normal;-webkit-text-stroke:0.2px #000;">точке 3, тыс. руб.</span>
<span class="t" style="transform:scaleX(0.9746);left:595.5px;transform-origin:0 0;top:229.23px;font-size:13.9px;line-height:13.9px;color:#000;font-weight:normal;-webkit-text-stroke:0.2px #000;">Продажи по Торговой</span>
<span class="t" style="transform:scaleX(0.9595);left:595.5px;transform-origin:0 0;top:247.73px;font-size:13.9px;line-height:13.9px;color:#000;font-weight:normal;-webkit-text-stroke:0.2px #000;">точке 4, тыс. руб.</span>
<span class="t" style="right:918.5px;transform-origin:100% 0;top:269.06px;font-size:12.45px;line-height:12.45px;color:#000;font-weight:normal;-webkit-text-stroke:0.2px #000;">01.06.2019</span>
<span class="t" style="left:140.5px;transform-origin:0 0;top:269.06px;font-size:12.45px;line-height:12.45px;color:#000;font-weight:normal;-webkit-text-stroke:0.2px #000;">25.223</span>
<span class="t" style="left:293.5px;transform-origin:0 0;top:269.06px;font-size:12.45px;line-height:12.45px;color:#000;font-weight:normal;-webkit-text-stroke:0.2px #000;">33.224</span>
<span class="t" style="left:446.5px;transform-origin:0 0;top:269.06px;font-size:12.45px;line-height:12.45px;color:#000;font-weight:normal;-webkit-text-stroke:0.2px #000;">14.557</span>
<span class="t" style="left:595.5px;transform-origin:0 0;top:269.06px;font-size:12.45px;line-height:12.45px;color:#000;font-weight:normal;-webkit-text-stroke:0.2px #000;">24.334</span>
<span class="t" style="right:918.5px;transform-origin:100% 0;top:289.06px;font-size:12.45px;line-height:12.45px;color:#000;font-weight:normal;-webkit-text-stroke:0.2px #000;">02.06.2019</span>
<span class="t" style="left:140.5px;transform-origin:0 0;top:289.06px;font-size:12.45px;line-height:12.45px;color:#000;font-weight:normal;-webkit-text-stroke:0.2px #000;">25.475</span>
<span class="t" style="left:293.5px;transform-origin:0 0;top:289.06px;font-size:12.45px;line-height:12.45px;color:#000;font-weight:normal;-webkit-text-stroke:0.2px #000;">33.722</span>
<span class="t" style="left:446.5px;transform-origin:0 0;top:289.06px;font-size:12.45px;line-height:12.45px;color:#000;font-weight:normal;-webkit-text-stroke:0.2px #000;">14.673</span>
<span class="t" style="left:595.5px;transform-origin:0 0;top:289.06px;font-size:12.45px;line-height:12.45px;color:#000;font-weight:normal;-webkit-text-stroke:0.2px #000;">24.456</span>
<span class="t" style="right:918.5px;transform-origin:100% 0;top:309.06px;font-size:12.45px;line-height:12.45px;color:#000;font-weight:normal;-webkit-text-stroke:0.2px #000;">03.06.2019</span>
<span class="t" style="left:140.5px;transform-origin:0 0;top:309.06px;font-size:12.45px;line-height:12.45px;color:#000;font-weight:normal;-webkit-text-stroke:0.2px #000;">25.73</span>
<span class="t" style="left:293.5px;transform-origin:0 0;top:309.06px;font-size:12.45px;line-height:12.45px;color:#000;font-weight:normal;-webkit-text-stroke:0.2px #000;">34.228</span>
<span class="t" style="left:446.5px;transform-origin:0 0;top:309.06px;font-size:12.45px;line-height:12.45px;color:#000;font-weight:normal;-webkit-text-stroke:0.2px #000;">14.791</span>
<span class="t" style="left:595.5px;transform-origin:0 0;top:309.06px;font-size:12.45px;line-height:12.45px;color:#000;font-weight:normal;-webkit-text-stroke:0.2px #000;">24.578</span>
<span class="t" style="right:918.5px;transform-origin:100% 0;top:329.06px;font-size:12.45px;line-height:12.45px;color:#000;font-weight:normal;-webkit-text-stroke:0.2px #000;">04.06.2019</span>
<span class="t" style="left:595.5px;transform-origin:0 0;top:329.06px;font-size:12.45px;line-height:12.45px;color:#000;font-weight:normal;-webkit-text-stroke:0.2px #000;">24.701</span>
<span class="t" style="right:918.5px;transform-origin:100% 0;top:349.06px;font-size:12.45px;line-height:12.45px;color:#000;font-weight:normal;-webkit-text-stroke:0.2px #000;">05.06.2019</span>
<span class="t" style="left:595.5px;transform-origin:0 0;top:349.06px;font-size:12.45px;line-height:12.45px;color:#000;font-weight:normal;-webkit-text-stroke:0.2px #000;">24.824</span>
<span class="t" style="right:918.5px;transform-origin:100% 0;top:369.06px;font-size:12.45px;line-height:12.45px;color:#000;font-weight:normal;-webkit-text-stroke:0.2px #000;">06.06.2019</span>
<span class="t" style="left:595.5px;transform-origin:0 0;top:369.06px;font-size:12.45px;line-height:12.45px;color:#000;font-weight:normal;-webkit-text-stroke:0.2px #000;">24.948</span>
<span class="t" style="right:918.5px;transform-origin:100% 0;top:389.06px;font-size:12.45px;line-height:12.45px;color:#000;font-weight:normal;-webkit-text-stroke:0.2px #000;">07.06.2019</span>
<span class="t" style="left:595.5px;transform-origin:0 0;top:389.06px;font-size:12.45px;line-height:12.45px;color:#000;font-weight:normal;-webkit-text-stroke:0.2px #000;">25.073</span>
<span class="t" style="right:918.5px;transform-origin:100% 0;top:409.06px;font-size:12.45px;line-height:12.45px;color:#000;font-weight:normal;-webkit-text-stroke:0.2px #000;">08.06.2019</span>
<span class="t" style="left:595.5px;transform-origin:0 0;top:409.06px;font-size:12.45px;line-height:12.45px;color:#000;font-weight:normal;-webkit-text-stroke:0.2px #000;">25.199</span>
<span class="t" style="right:918.5px;transform-origin:100% 0;top:429.06px;font-size:12.45px;line-height:12.45px;color:#000;font-weight:normal;-webkit-text-stroke:0.2px #000;">09.06.2019</span>
<span class="t" style="left:140.5px;transform-origin:0 0;top:429.06px;font-size:12.45px;line-height:12.45px;color:#000;font-weight:normal;-webkit-text-stroke:0.2px #000;">27.313</span>
<span class="t" style="left:293.5px;transform-origin:0 0;top:429.06px;font-size:12.45px;line-height:12.45px;color:#000;font-weight:normal;-webkit-text-stroke:0.2px #000;">37.427</span>
<span class="t" style="left:446.5px;transform-origin:0 0;top:429.06px;font-size:12.45px;line-height:12.45px;color:#000;font-weight:normal;-webkit-text-stroke:0.2px #000;">15.515</span>
<span class="t" style="left:595.5px;transform-origin:0 0;top:429.06px;font-size:12.45px;line-height:12.45px;color:#000;font-weight:normal;-webkit-text-stroke:0.2px #000;">25.325</span>
<span class="t" style="right:918.5px;transform-origin:100% 0;top:449.06px;font-size:12.45px;line-height:12.45px;color:#000;font-weight:normal;-webkit-text-stroke:0.2px #000;">10.06.2019</span>
<span class="t" style="left:140.5px;transform-origin:0 0;top:449.06px;font-size:12.45px;line-height:12.45px;color:#000;font-weight:normal;-webkit-text-stroke:0.2px #000;">27.586</span>
<span class="t" style="left:293.5px;transform-origin:0 0;top:449.06px;font-size:12.45px;line-height:12.45px;color:#000;font-weight:normal;-webkit-text-stroke:0.2px #000;">37.988</span>
<span class="t" style="left:446.5px;transform-origin:0 0;top:449.06px;font-size:12.45px;line-height:12.45px;color:#000;font-weight:normal;-webkit-text-stroke:0.2px #000;">15.639</span>
<span class="t" style="left:595.5px;transform-origin:0 0;top:449.06px;font-size:12.45px;line-height:12.45px;color:#000;font-weight:normal;-webkit-text-stroke:0.2px #000;">25.451</span>
<span class="t" style="right:918.5px;transform-origin:100% 0;top:469.06px;font-size:12.45px;line-height:12.45px;color:#000;font-weight:normal;-webkit-text-stroke:0.2px #000;">11.06.2019</span>
<span class="t" style="left:140.5px;transform-origin:0 0;top:469.06px;font-size:12.45px;line-height:12.45px;color:#000;font-weight:normal;-webkit-text-stroke:0.2px #000;">27.862</span>
<span class="t" style="left:293.5px;transform-origin:0 0;top:469.06px;font-size:12.45px;line-height:12.45px;color:#000;font-weight:normal;-webkit-text-stroke:0.2px #000;">38.558</span>
<span class="t" style="left:446.5px;transform-origin:0 0;top:469.06px;font-size:12.45px;line-height:12.45px;color:#000;font-weight:normal;-webkit-text-stroke:0.2px #000;">15.764</span>
<span class="t" style="left:595.5px;transform-origin:0 0;top:469.06px;font-size:12.45px;line-height:12.45px;color:#000;font-weight:normal;-webkit-text-stroke:0.2px #000;">25.578</span>
<span class="t" style="right:918.5px;transform-origin:100% 0;top:489.06px;font-size:12.45px;line-height:12.45px;color:#000;font-weight:normal;-webkit-text-stroke:0.2px #000;">12.06.2019</span>
<span class="t" style="left:140.5px;transform-origin:0 0;top:489.06px;font-size:12.45px;line-height:12.45px;color:#000;font-weight:normal;-webkit-text-stroke:0.2px #000;">28.141</span>
<span class="t" style="left:293.5px;transform-origin:0 0;top:489.06px;font-size:12.45px;line-height:12.45px;color:#000;font-weight:normal;-webkit-text-stroke:0.2px #000;">39.136</span>
<span class="t" style="left:446.5px;transform-origin:0 0;top:489.06px;font-size:12.45px;line-height:12.45px;color:#000;font-weight:normal;-webkit-text-stroke:0.2px #000;">15.891</span>
<span class="t" style="left:595.5px;transform-origin:0 0;top:489.06px;font-size:12.45px;line-height:12.45px;color:#000;font-weight:normal;-webkit-text-stroke:0.2px #000;">25.706</span>
<span class="t" style="right:918.5px;transform-origin:100% 0;top:509.06px;font-size:12.45px;line-height:12.45px;color:#000;font-weight:normal;-webkit-text-stroke:0.2px #000;">13.06.2019</span>
<span class="t" style="left:140.5px;transform-origin:0 0;top:509.06px;font-size:12.45px;line-height:12.45px;color:#000;font-weight:normal;-webkit-text-stroke:0.2px #000;">28.422</span>
<span class="t" style="left:293.5px;transform-origin:0 0;top:509.06px;font-size:12.45px;line-height:12.45px;color:#000;font-weight:normal;-webkit-text-stroke:0.2px #000;">39.723</span>
<span class="t" style="left:446.5px;transform-origin:0 0;top:509.06px;font-size:12.45px;line-height:12.45px;color:#000;font-weight:normal;-webkit-text-stroke:0.2px #000;">16.018</span>
<span class="t" style="left:595.5px;transform-origin:0 0;top:509.06px;font-size:12.45px;line-height:12.45px;color:#000;font-weight:normal;-webkit-text-stroke:0.2px #000;">25.835</span>
<span class="t" style="right:918.5px;transform-origin:100% 0;top:529.06px;font-size:12.45px;line-height:12.45px;color:#000;font-weight:normal;-webkit-text-stroke:0.2px #000;">14.06.2019</span>
<span class="t" style="left:140.5px;transform-origin:0 0;top:529.06px;font-size:12.45px;line-height:12.45px;color:#000;font-weight:normal;-webkit-text-stroke:0.2px #000;">28.706</span>
<span class="t" style="left:293.5px;transform-origin:0 0;top:529.06px;font-size:12.45px;line-height:12.45px;color:#000;font-weight:normal;-webkit-text-stroke:0.2px #000;">40.319</span>
<span class="t" style="left:446.5px;transform-origin:0 0;top:529.06px;font-size:12.45px;line-height:12.45px;color:#000;font-weight:normal;-webkit-text-stroke:0.2px #000;">16.146</span>
<span class="t" style="left:595.5px;transform-origin:0 0;top:529.06px;font-size:12.45px;line-height:12.45px;color:#000;font-weight:normal;-webkit-text-stroke:0.2px #000;">25.964</span>
<span class="t" style="right:918.5px;transform-origin:100% 0;top:549.06px;font-size:12.45px;line-height:12.45px;color:#000;font-weight:normal;-webkit-text-stroke:0.2px #000;">15.06.2019</span>
<span class="t" style="left:140.5px;transform-origin:0 0;top:549.06px;font-size:12.45px;line-height:12.45px;color:#000;font-weight:normal;-webkit-text-stroke:0.2px #000;">28.993</span>
<span class="t" style="left:293.5px;transform-origin:0 0;top:549.06px;font-size:12.45px;line-height:12.45px;color:#000;font-weight:normal;-webkit-text-stroke:0.2px #000;">40.924</span>
<span class="t" style="left:446.5px;transform-origin:0 0;top:549.06px;font-size:12.45px;line-height:12.45px;color:#000;font-weight:normal;-webkit-text-stroke:0.2px #000;">16.275</span>
<span class="t" style="left:595.5px;transform-origin:0 0;top:549.06px;font-size:12.45px;line-height:12.45px;color:#000;font-weight:normal;-webkit-text-stroke:0.2px #000;">26.094</span>
<div style="left:25px;top:323px;width:2px;height:100px;background:#017341"></div>
<div style="left:136px;top:322px;width:458px;height:2px;background:#017341"></div>
<div style="left:136px;top:322px;width:2px;height:103px;background:#017341"></div>
<div style="left:136px;top:423px;width:454px;height:2px;background:#017341"></div>
<div style="left:592px;top:322px;width:2px;height:99px;background:#017341"></div>
<div style="left:590px;top:421px;width:5px;height:5px;background:#017341;border:1px solid #fff;box-sizing:content-box;left:589px;top:420px"></div>
<div style="left:132px;top:319px;width:466px;height:110px;border:3px solid #ff0000;border-radius:6px;box-sizing:border-box"></div>
<div style="left:596px;top:427px;width:24px;height:23px;background:#fff;border:1px solid #217346;box-sizing:border-box"></div>
<svg style="left:600px;top:431px;" width="17" height="16" viewBox="0 0 17 16"><path d="M5 0.5L1.5 7h3l-2 6 5.5-8h-3l2-4.5z" fill="#f7c27a"/><path d="M7.5 2.5h8v12h-10v-3" fill="none" stroke="#777" stroke-width="1.2"/><rect x="7.5" y="2" width="8" height="1.6" fill="#777"/><rect x="6" y="8" width="9" height="1.8" fill="#1e7bc4"/><rect x="8" y="11" width="6" height="1.6" fill="#33a060"/><rect x="8" y="5.5" width="3" height="1" fill="#e8412c"/></svg>
<div style="left:1030px;top:223px;width:1px;height:451px;background:#bdbdbd"></div>
<div style="left:1031px;top:197px;width:21px;height:476px;background:#e6e6e6"></div>
<div style="left:1034px;top:206px;width:15px;height:467px;background:#fff;border:1px solid #bdbdbd;box-sizing:border-box"></div>
<div style="left:1034px;top:206px;width:15px;height:15px;background:#fff;border:1px solid #bdbdbd;box-sizing:border-box"></div>
<svg style="left:1037px;top:211px;" width="9" height="5" viewBox="0 0 9 5"><path d="M0 5h9L4.5 0z" fill="#777"/></svg>
<div style="left:1035px;top:637px;width:13px;height:22px;background:#dcdcdc"></div>
<div style="left:1034px;top:659px;width:15px;height:15px;background:#fff;border:1px solid #bdbdbd;box-sizing:border-box"></div>
<svg style="left:1037px;top:664px;" width="9" height="5" viewBox="0 0 9 5"><path d="M0 0h9L4.5 5z" fill="#777"/></svg>
<div style="left:1px;top:673px;width:1051px;height:28px;background:#e6e6e6"></div>
<div style="left:1px;top:673px;width:1029px;height:1px;background:#bdbdbd"></div>
<svg style="left:27px;top:682px;" width="6" height="9" viewBox="0 0 6 9"><path d="M5 0v9L0 4.5z" fill="#bdbdbd"/></svg>
<svg style="left:56px;top:682px;" width="6" height="9" viewBox="0 0 6 9"><path d="M0 0v9l5-4.5z" fill="#bdbdbd"/></svg>
<div style="left:101px;top:673px;width:107px;height:24px;background:#fff;border-left:1px solid #bdbdbd;border-right:1px solid #bdbdbd;box-sizing:border-box"></div>
<div style="left:101px;top:696px;width:107px;height:2px;background:#017341"></div>
<span class="t" style="transform:scaleX(0.9770);left:113.4px;transform-origin:0 0;top:679.5px;font-size:13px;line-height:13px;color:#017341;font-weight:bold;">microexcel.ru</span>
<svg style="left:240px;top:679px;" width="18" height="18" viewBox="0 0 18 18"><circle cx="9" cy="9" r="7.6" fill="none" stroke="#777" stroke-width="1.3"/><path d="M9 4.8v8.4M4.8 9h8.4" stroke="#777" stroke-width="1.5"/></svg>
<div style="left:631px;top:682px;width:2px;height:2px;background:#a8a8a8"></div>
<div style="left:631px;top:686px;width:2px;height:2px;background:#a8a8a8"></div>
<div style="left:631px;top:690px;width:2px;height:2px;background:#a8a8a8"></div>
<div style="left:648px;top:680px;width:383px;height:15px;background:#dcdcdc"></div>
<div style="left:648px;top:680px;width:328px;height:15px;background:#fff;border:1px solid #bdbdbd;box-sizing:border-box"></div>
<div style="left:648px;top:680px;width:15px;height:15px;background:#fff;border:1px solid #bdbdbd;box-sizing:border-box"></div>
<svg style="left:653px;top:684px;" width="5" height="8" viewBox="0 0 5 8"><path d="M5 0v8L0 4z" fill="#555"/></svg>
<div style="left:1016px;top:680px;width:15px;height:15px;background:#fff;border:1px solid #bdbdbd;box-sizing:border-box"></div>
<svg style="left:1021px;top:684px;" width="5" height="8" viewBox="0 0 5 8"><path d="M0 0v8l5-4z" fill="#555"/></svg>
<div style="left:1px;top:701px;width:1051px;height:22px;background:#f3f3f3"></div>
<div style="left:1px;top:701px;width:1051px;height:1px;background:#d4d4d4"></div>
<svg style="left:8px;top:704px;" width="15" height="15" viewBox="0 0 15 15"><circle cx="4" cy="4" r="3.5" fill="#555"/><rect x="3.5" y="4.5" width="11" height="10" fill="#fff" stroke="#555"/><path d="M3.5 7.5h11M3.5 10h11M3.5 12.5h11M7 4.5v10M10.5 4.5v10" stroke="#555" stroke-width="0.8"/></svg>
<span class="t" style="transform:scaleX(0.9404);left:653.9px;transform-origin:0 0;top:705.84px;font-size:12px;line-height:12px;color:#262626;font-weight:normal;">Количество: 15</span>
<div style="left:752px;top:702px;width:38px;height:21px;background:#c8c8c8"></div>
<svg style="left:764px;top:705px;" width="14" height="14" viewBox="0 0 14 14"><path d="M0 0h4v4H0zM5 0h4v4H5zM10 0h4v4h-4zM0 5h4v4H0zM5 5h4v4H5zM10 5h4v4h-4zM0 10h4v4H0zM5 10h4v4H5zM10 10h4v4h-4z" fill="#6a6a6a"/></svg>
<svg style="left:801px;top:705px;" width="15" height="14" viewBox="0 0 15 14"><rect x="1" y="0.5" width="13" height="13" fill="none" stroke="#6a6a6a" stroke-width="1.2"/><rect x="4" y="3" width="7" height="8" fill="none" stroke="#6a6a6a" stroke-width="1.1"/><path d="M5.5 5.5h4M5.5 7h4M5.5 8.5h4" stroke="#6a6a6a" stroke-width="0.8"/></svg>
<svg style="left:839px;top:705px;" width="16" height="14" viewBox="0 0 16 14"><rect x="1.5" y="0.5" width="13" height="13" fill="none" stroke="#6a6a6a" stroke-width="1.2"/><path d="M1.5 7.5h7v-7M5 0.5v7" fill="none" stroke="#6a6a6a" stroke-width="1.2"/></svg>
<div style="left:871px;top:711px;width:6px;height:2px;background:#555"></div>
<div style="left:881px;top:712px;width:100px;height:1px;background:#9a9a9a"></div>
<div style="left:928px;top:706px;width:6px;height:11px;background:#6a6a6a"></div>
<svg style="left:984px;top:708px;" width="8" height="8" viewBox="0 0 8 8"><path d="M4 0v8M0 4h8" stroke="#444" stroke-width="1.8"/></svg>
<span class="t" style="transform:scaleX(0.8522);left:1003.9px;transform-origin:0 0;top:705.84px;font-size:12px;line-height:12px;color:#262626;font-weight:normal;">100 %</span>
<div style="left:0px;top:65px;width:1px;height:659px;background:#017341"></div>
<div style="left:1052px;top:65px;width:1px;height:659px;background:#017341"></div>
<div style="left:0px;top:723px;width:1053px;height:1px;background:#017341"></div>
</div></body></html>
